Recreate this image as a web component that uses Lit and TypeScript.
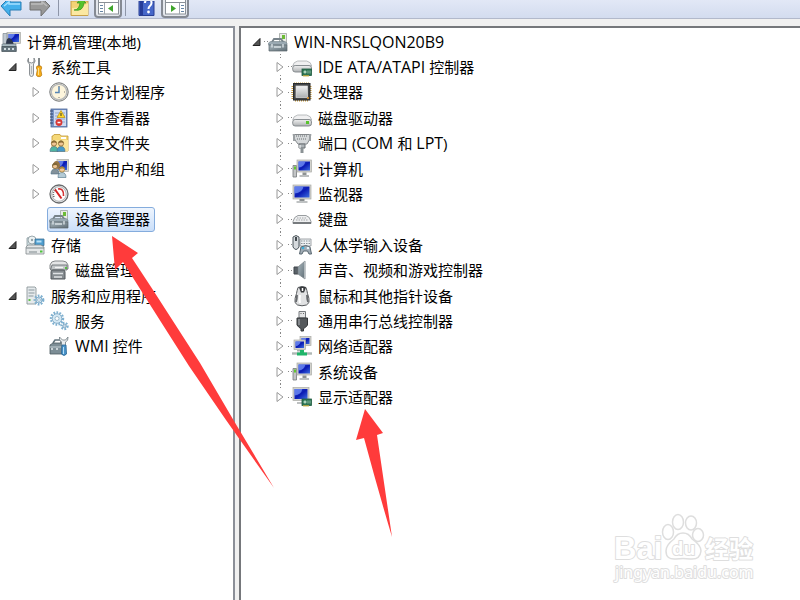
import { LitElement, html, css, svg, nothing, SVGTemplateResult } from "lit";
import { customElement, property } from "lit/decorators.js";
import { classMap } from "lit/directives/class-map.js";

const screen = (x: number, y: number, w: number, h: number) => svg`
  <rect x=${x} y=${y} width=${w} height=${h} fill="#d3d3cd" stroke="#a9aaa6" stroke-width=".7"/>
  <rect x=${x + 1.5} y=${y + 1.5} width=${w - 3} height=${h - 3} fill="url(#scr)"/>
  <path d="M${x + 1.5} ${y + 1.5}h${(w - 3) * 0.6}q-1 ${h * 0.45} ${-(w - 3) * 0.6} ${h * 0.5}z" fill="#6f8cf2" opacity=".8"/>`;

const toolcase = svg`
  <path d="M11.500 10V1.500h7V14h-3z" fill="#e9ebe6" stroke="#9da39f" stroke-width=".8"/>
  <path d="M14 3h3v4h-3z" fill="#6cbb35"/>
  <path d="M4 10l2-3h7l3 4" fill="none" stroke="#77838a" stroke-width="1.800"/>
  <path d="M.500 11l2-1.500h14.500l2 1.500v2H.500z" fill="#9aa9b2" stroke="#74838c" stroke-width=".6"/>
  <path d="M1 13h18v6H1z" fill="url(#steel)" stroke="#59656c" stroke-width=".7"/>
  <path d="M4 12v3.500M15 12v3.500M6 15h7" stroke="#d7e0e4" stroke-width="1.400"/>`;

const gear = (cx: number, cy: number, r: number) => svg`
  <circle cx=${cx} cy=${cy} r=${r} fill="none" stroke="#7eb0d0" stroke-width="2.400" stroke-dasharray="1.700 1.300"/>
  <circle cx=${cx} cy=${cy} r=${r - 1.2} fill="#d5e9f4" stroke="#86aeca" stroke-width="1"/>
  <circle cx=${cx} cy=${cy} r=${r / 3} fill="#fff" stroke="#8fb0c5" stroke-width=".8"/>`;

const person = (x: number, y: number, hair: string, body: string) => svg`
  <path d="M${x - 4} ${y + 8}q0-5 4-5t4 5z" fill=${body} stroke="#4d7184" stroke-width=".6"/>
  <circle cx=${x} cy=${y} r="2.600" fill="#f0c695" stroke=${hair} stroke-width=".8"/>
  <path d="M${x - 2.7} ${y}q0-3 2.700-3t2.700 3q-2-2-5.400 0z" fill=${hair}/>`;

const drive = (y: number) => svg`
  <path d="M.700 ${y + 5}q.500-4 5-5h9q4.500 1 5 5z" fill="#f0f0f1" stroke="#aaadb0" stroke-width=".8"/>
  <rect x=".700" y=${y + 4.5} width="18.800" height="6.500" rx="2.500" fill="url(#metal)" stroke="#7f8488" stroke-width=".9"/>`;

const chip = svg`
  <rect x="10" y="12" width="9.500" height="6.500" fill="#2d7454" stroke="#1f5b40" stroke-width=".8"/>
  <path d="M12 14h2v2h-2zM16 13.500v3M18 13.500v3" fill="#b4d9c5" stroke="#a6cfb8" stroke-width=".8"/>
  <path d="M11 18.800h6" stroke="#c2aa3c" stroke-width="1.200"/>`;

const pcWithTower = svg`
  <path d="M1 6.500h3.500V18H1z" fill="#c3c5c6" stroke="#75797b" stroke-width=".8"/>
  <path d="M2 7.500h2v3H2z" fill="#63c832"/>
  ${screen(5, 1, 14.5, 12)}
  <path d="M10.500 13.500h4v2.500h-4z" fill="#8e9293"/><path d="M7.500 16h9.500v2H7.500z" fill="#bbbebf"/>`;

const ICONS: Record<string, SVGTemplateResult> = {
  console: svg`
    ${screen(6, 0.5, 13.5, 11)}
    <path d="M2 1.500h4v10H2z" fill="#bfc8d0" stroke="#7f8992" stroke-width=".7"/>
    <path d="M5 13q0-7 3-7t5 7z" fill="#2d374c"/>
    <path d="M1 12h14v2.500H1z" fill="#a9b9c1" stroke="#68777f" stroke-width=".6"/>
    <path d="M.800 14.500h14.500v5H.800z" fill="#64747d" stroke="#404d54" stroke-width=".7"/>
    <path d="M3 16h2v2H3zM7 16h2v2H7zM11 16h2v2h-2z" fill="#d3dde1"/>`,
  tools: svg`
    <path d="M3.500 1q-2 3 0 5l1 1V17q0 2.500 2 2.500t2-2.500V7q3-3 .500-6v4l-2.500 1-3-1z" fill="#e8eaeb" stroke="#80868a" stroke-width=".9"/>
    <path d="M6.500 9v8" stroke="#b2b7ba" stroke-width="1.200"/>
    <path d="M13 1h2v9h-2z" fill="#83898c"/>
    <path d="M12 9h4l.800 2-1 2 1 5q-.500 1.700-2.800 1.700T11.300 18l1-5-1-2z" fill="#f6ad1a" stroke="#b77405" stroke-width=".7"/>
    <path d="M13.500 11v7" stroke="#ffe18a"/>`,
  clock: svg`
    <circle cx="10" cy="10" r="9.200" fill="#f7f2e2" stroke="#6e7173" stroke-width="1"/>
    <circle cx="10" cy="10" r="7.800" fill="#fdf5dc" stroke="#b8babb" stroke-width="1.500"/>
    <path d="M10 4.500V10.500h-4" fill="none" stroke="#5786b5" stroke-width="1.500"/>
    <path d="M10 4v1M10 15v1M15 10h1" stroke="#777"/>`,
  events: svg`
    <rect x="2" y="1" width="16" height="18" fill="#7995c7" stroke="#4a6598" stroke-width=".8"/>
    <path d="M5 2h12v16H5z" fill="#cfdbf1"/><path d="M6 5h10M6 8h10M6 11h10M6 14h10" stroke="#91a7d0"/>
    <path d="M1 3h3M1 6h3M1 9h3M1 12h3M1 15h3" stroke="#37496d" stroke-width="1.200"/>
    <path d="M12 2.500l4 7H8z" fill="#ffda29" stroke="#bd8f0a" stroke-width=".7"/><path d="M12 5v3" stroke="#333"/>
    <circle cx="10" cy="14.500" r="3.400" fill="#d93735"/><path d="M8.500 14.500h3" stroke="#fff" stroke-width="1.500"/>`,
  share: svg`
    <path d="M3 5V3h1l1-1.500h6L12 3h7v15H3z" fill="#f5d878" stroke="#c29832" stroke-width=".8"/>
    <path d="M12 4h5v2h-5z" fill="#fff"/><path d="M3 7h16v11H3z" fill="#fbe69c"/>
    ${person(5, 10.5, "#8a6d35", "#4fb5a2")}${person(12, 10.5, "#8a6d35", "#4599c8")}`,
  users: svg`
    ${screen(8, 0.5, 11.5, 12)}
    <path d="M3.500 9q0-6 3.500-7 4 0 4 5l-1 3z" fill="#967544"/>
    ${person(6, 7, "#7f6638", "#83919a")}${person(13, 10.5, "#a8853c", "#b4cbd6")}`,
  gauge: svg`
    <circle cx="10" cy="10" r="9" fill="#fff" stroke="#686b6d" stroke-width="1.300"/>
    <circle cx="10" cy="10" r="7.300" fill="#fff" stroke="#b9bcbd" stroke-width="1.200"/>
    <path d="M5 13q-2-5 2-8" fill="none" stroke="#626567" stroke-width="1.500" stroke-dasharray="1 1"/>
    <path d="M6 5.500l6.500 9" stroke="#d52424" stroke-width="2"/>
    <path d="M9 5q6-1 5.500 7" fill="none" stroke="#d23434" stroke-width="1.600"/>`,
  devices: toolcase,
  storage: svg`
    <path d="M2 11V3q3-2.500 8 0v8z" fill="#cfdfe3" stroke="#8c9b9f" stroke-width=".8"/>
    <circle cx="7" cy="5" r="4" fill="#edf3f4" stroke="#9ca9ad"/><circle cx="7" cy="5" r="1.200" fill="#91a1a7"/>
    <path d="M10 4h9v6.500h-9z" fill="#4e9dce" stroke="#3a6e94" stroke-width=".8"/><path d="M11.500 5.500h5v2h-5z" fill="#b9e0f6"/>
    <path d="M1 12l2-2h13l3 2v7H1z" fill="#e4e7e8" stroke="#838b8e" stroke-width=".8"/>
    <path d="M1 13h18M4 17h8" stroke="#7d878b"/><path d="M15 15.500h2.500v2H15z" fill="#4dc43b"/>`,
  disk: svg`
    <path d="M1 5q1-4 5-4h8q4 0 5 4v4H1z" fill="#e4e5e6" stroke="#85898b"/>
    <path d="M3 5h15v5H1.500z" fill="#c2c6c8" stroke="#6d7376" stroke-width=".9"/>
    <path d="M6 7.500h8" stroke="#f4f4f4" stroke-width="1.300"/><path d="M16 7h2v2h-2z" fill="#57bb45"/>
    <path d="M2 12q0-2 2-2h10q2 0 2 2v7H2z" fill="#868c90" stroke="#53595c"/>
    <path d="M4 13.500h10M5 17h8" stroke="#dfe2e4" stroke-width="1.500"/>`,
  server: svg`
    <path d="M2 1h8l1 1v16H2z" fill="#e5eaec" stroke="#8c979b" stroke-width=".9"/>
    <path d="M3.500 4h6M3.500 7h6M3.500 10h5" stroke="#8b989e" stroke-width="1.200"/>
    <path d="M3.500 13h2v2h-2z" fill="#5fc146"/>${gear(14, 14, 4.2)}`,
  gears: svg`${gear(8, 7.5, 6)}${gear(15.5, 15, 3)}`,
  wmi: svg`
    <path d="M4 7l2-3h6v3" fill="none" stroke="#63747d" stroke-width="1.600"/>
    <path d="M1 9l3-2h10v11H1z" fill="#7c8d95" stroke="#4b5a61" stroke-width=".8"/>
    <path d="M1 11h13" stroke="#c4d0d5"/><path d="M3 12v2M8 12v2" stroke="#e3eaed" stroke-width="1.500"/>
    <path d="M10.500 1q-1 3 2 5v6h4V6q3-1 2.500-5l-2.500 3h-3z" fill="#e8ecee" stroke="#717c81" stroke-width=".8"/>
    <path d="M13 9h4l.500 9q-2.500 3-5 0z" fill="#4993ca" stroke="#286592" stroke-width=".8"/><path d="M14.500 11v7" stroke="#b7e0fa"/>`,
  ide: svg`${drive(4)}${chip}`,
  cpu: svg`
    <path d="M2 3h15v14H2z" fill="none" stroke="#c99b3d" stroke-width="5" stroke-dasharray="1 1"/>
    <rect x="1.500" y="1.500" width="16.500" height="16.500" fill="#444648" stroke="#292b2d"/>
    <rect x="4" y="4" width="11.500" height="11.500" fill="url(#metal)" stroke="#dedede" stroke-width=".7"/>
    <circle cx="16" cy="16" r="1" fill="#ef9d28"/>`,
  drive: svg`${drive(7)}<path d="M14 13h3v3h-3z" fill="#59c52d"/>`,
  port: svg`
    <path d="M1 1.500h18l-2 6-2 3.500H6L3 7z" fill="#d5d8da" stroke="#85898c"/>
    <path d="M4 3h11M5 6h10" stroke="#8d9295" stroke-width="1.500" stroke-dasharray="1 1"/>
    <path d="M2 1v7M18 1v7" stroke="#9ba0a3" stroke-width="2"/>
    <path d="M7 11h6v4H7z" fill="#aeb4b8" stroke="#6c7377"/><path d="M8.500 15h3v5h-3z" fill="#8b9295"/><path d="M8 12v3" stroke="#fff"/>`,
  computer: pcWithTower,
  monitor: svg`
    ${screen(1, 1, 18, 14)}<path d="M7.500 15h5v2.500h-5z" fill="#888d8f"/><path d="M4.500 17h11v2h-11z" fill="#bfc2c3"/>`,
  keyboard: svg`
    <path d="M1 12.500q1-5 5-6h8q4 1 5 6v2H1z" fill="#eeeff0" stroke="#999da0"/>
    <path d="M5 9h10M4 11h12" stroke="#a4a7aa" stroke-dasharray="1.500 1"/>
    <path d="M1 13h18v2H1z" fill="#777b7e"/>`,
  hid: svg`
    <path d="M8 4h11v7H8z" fill="#edf0f2" stroke="#8a9196" stroke-width=".8"/>
    <path d="M9 6h9M9 8.500h9" stroke="#8a9399" stroke-width="1.200" stroke-dasharray="1.500 1"/>
    <path d="M1 2q3-3 6 0v10q-3 5-6 0z" fill="#d6dadd" stroke="#4d565c"/><path d="M4 2v4" stroke="#30383d" stroke-width="1.800"/>
    <path d="M9 12q5-3 9 0l1.500 7H17l-1.500-3h-4L10 19H7.500z" fill="#a1acb5" stroke="#596770"/>
    <circle cx="11" cy="13" r="1.300" fill="#3bb0dc"/><circle cx="16" cy="13" r="1.300" fill="#eaf5fa"/>`,
  speaker: svg`
    <path d="M2 7h4v7H2z" fill="#596167" stroke="#3e454a"/><path d="M6 7l7-6v18l-7-5z" fill="url(#steel)" stroke="#7e868b" stroke-width=".8"/>
    <path d="M13 1.500v17" stroke="#c1c7ca" stroke-width="1.600"/>`,
  mouse: svg`
    <path d="M6 1.500Q10-.500 14 1.500q1 3 1.500 6 2 5 1.500 9-1.500 3.300-7 3.300T3 16.500q-.500-4 1.500-9 .500-3 1.500-6z" fill="#e1e2e3" stroke="#575a5d"/>
    <path d="M5 9q0 4-1 7M15 9q0 4 1 7" fill="none" stroke="#66696c" stroke-width="1.800"/>
    <path d="M7 1.500l2 5h3l2-5-2-.700H9z" fill="#373a3d"/><path d="M10.500 2v3" stroke="#fff" stroke-width="1.500"/><path d="M8 9q-1 5 0 8" stroke="#fff" stroke-width="2" fill="none"/>`,
  usb: svg`
    <path d="M7 .500h6.500V7H7z" fill="#e4e5e6" stroke="#777b7e"/><path d="M8.500 2.500h1M11 2.500h1" stroke="#666"/>
    <path d="M5 7h10.500v7q-2 3-4 3.500V20H9v-2.500Q7 17 5 14z" fill="#55595c" stroke="#35383a"/><path d="M7 8v6" stroke="#94999c" stroke-width="1.500"/>`,
  network: svg`
    ${screen(8, 0.5, 11, 9)}${screen(2, 4, 11.5, 9.5)}
    <path d="M5 14h5v1.500H5z" fill="#a9adaf"/><path d="M0 17.500h20" stroke="#aeb7b4" stroke-width="2.400"/>
    <path d="M8 14h4v2.500h3v3H5v-3h3z" fill="#20b66a"/>`,
  display: svg`${screen(1, 0.5, 16, 13)}<path d="M5 15h6v2H5z" fill="#bdc0c1"/>${chip}`,
};

@customElement("tree-icon")
class TreeIcon extends LitElement {
  @property() name = "";
  static styles = css`
    :host { display: block; width: 20px; height: 20px; }
    svg { display: block; width: 20px; height: 20px; overflow: visible; }
  `;
  render() {
    return html`<svg viewBox="0 0 20 20" aria-hidden="true">
      <defs>
        <linearGradient id="scr" x1="0" y1="0" x2="1" y2="1">
          <stop offset="0" stop-color="#2343d6"/><stop offset=".5" stop-color="#0b1bb4"/><stop offset="1" stop-color="#3d6ee0"/>
        </linearGradient>
        <linearGradient id="steel" x1="0" y1="0" x2="1" y2="1">
          <stop offset="0" stop-color="#a9b7be"/><stop offset="1" stop-color="#5e6c74"/>
        </linearGradient>
        <linearGradient id="metal" x1="0" y1="0" x2="0" y2="1">
          <stop offset="0" stop-color="#f1f1f1"/><stop offset="1" stop-color="#adb0b2"/>
        </linearGradient>
      </defs>
      ${ICONS[this.name]}
    </svg>`;
  }
}

interface Row {
  label: string;
  icon: string;
  level: number;
  state?: "open" | "closed";
  selected?: boolean;
}

const row = (level: number, icon: string, label: string, state?: Row["state"], selected = false): Row =>
  ({ level, icon, label, state, selected });

const CONSOLE: Row[] = [
  row(0, "console", "计算机管理(本地)"),
  row(1, "tools", "系统工具", "open"),
  row(2, "clock", "任务计划程序", "closed"),
  row(2, "events", "事件查看器", "closed"),
  row(2, "share", "共享文件夹", "closed"),
  row(2, "users", "本地用户和组", "closed"),
  row(2, "gauge", "性能", "closed"),
  row(2, "devices", "设备管理器", undefined, true),
  row(1, "storage", "存储", "open"),
  row(2, "disk", "磁盘管理"),
  row(1, "server", "服务和应用程序", "open"),
  row(2, "gears", "服务"),
  row(2, "wmi", "WMI 控件"),
];

const DEVICES: Row[] = [
  row(1, "devices", "WIN-NRSLQON20B9", "open"),
  row(2, "ide", "IDE ATA/ATAPI 控制器", "closed"),
  row(2, "cpu", "处理器", "closed"),
  row(2, "drive", "磁盘驱动器", "closed"),
  row(2, "port", "端口 (COM 和 LPT)", "closed"),
  row(2, "computer", "计算机", "closed"),
  row(2, "monitor", "监视器", "closed"),
  row(2, "keyboard", "键盘", "closed"),
  row(2, "hid", "人体学输入设备", "closed"),
  row(2, "speaker", "声音、视频和游戏控制器", "closed"),
  row(2, "mouse", "鼠标和其他指针设备", "closed"),
  row(2, "usb", "通用串行总线控制器", "closed"),
  row(2, "network", "网络适配器", "closed"),
  row(2, "computer", "系统设备", "closed"),
  row(2, "display", "显示适配器", "closed"),
];

// Latin runs are set one pixel larger than the Chinese text around them.
const runs = (label: string) =>
  label.split(/([A-Z][A-Z0-9\-\/ ]*)/).filter(Boolean)
    .map((part) => (/^[A-Z]/.test(part) ? html`<b class="latin">${part}</b>` : part));

@customElement("nav-tree")
class NavTree extends LitElement {
  @property({ attribute: false }) rows: Row[] = [];
  @property({ type: Boolean }) lines = false;
  @property() label = "";
  static styles = css`
    :host { display: block; }
    ul { list-style: none; margin: 0; padding: 0; }
    li { display: flex; align-items: center; height: 25px; white-space: nowrap; }
    li:nth-child(5n + 3), li:nth-child(5n) { height: 26px; }
    .level-2 { padding-left: 24px; }
    .twisty {
      flex: none; width: 24px; height: 100%; padding: 0; border: 0; background: none;
      display: flex; flex-direction: column; align-items: center; justify-content: space-between;
    }
    .twisty svg { display: block; width: 10px; height: 12px; margin: auto; }
    .lines .level-2 .twisty::before, .lines .level-2 .twisty::after {
      content: ""; height: 4px; width: 1px;
      background: repeating-linear-gradient(#888 0 1px, transparent 1px 3px);
    }
    .lines .level-2:last-child .twisty::after { background: none; }
    .lines .item::before {
      content: ""; width: 4px; height: 1px; margin-left: -4px;
      background: repeating-linear-gradient(90deg, #888 0 1px, transparent 1px 3px);
    }
    .item {
      display: flex; align-items: center; height: 25px; box-sizing: border-box;
      color: #000; text-decoration: none; line-height: 22px; padding-left: 1px;
    }
    .lines .item { padding-left: 0; }
    .item span { padding: 0 4px 0 6px; }
    .latin { font-weight: 400; font-size: 16px; }
    .item.selected {
      margin-left: -1px; border: 1px solid #84acdd; border-radius: 3px;
      background: linear-gradient(#eef5fe, #cbdff9);
    }
  `;
  render() {
    return html`<ul class=${classMap({ lines: this.lines })} aria-label=${this.label}>
      ${this.rows.map((r) => html`<li class="level-${r.level}">
        ${r.level === 0 ? nothing : r.state
          ? html`<button class="twisty" aria-label=${(r.state === "open" ? "折叠 " : "展开 ") + r.label}>
              <svg viewBox="0 0 10 12" aria-hidden="true">${r.state === "open"
                ? svg`<path d="M9 2.500v7H2z" fill="#555" stroke="#222"/>`
                : svg`<path d="M2 1.500l6 4.500-6 4.500z" fill="#fff" stroke="#999"/>`}</svg>
            </button>`
          : html`<span class="twisty"></span>`}
        <a href="#" class=${classMap({ item: true, selected: !!r.selected })}>
          <tree-icon name=${r.icon}></tree-icon><span>${runs(r.label)}</span>
        </a>
      </li>`)}
    </ul>`;
  }
}

const paneGlyph = (flip: boolean) => svg`
  <rect x=".5" y="-4" width="20" height="18" fill="#fff" stroke="#8a9097"/>
  <path d="M1 2.500h19" stroke="#8a9097"/>
  <path d=${flip ? "M14.500 3v11" : "M6.500 3v11"} stroke="#9fa6ad"/>
  <path d=${flip ? "M16 5.500h3M16 8.500h3M16 11.500h3" : "M2 5.500h3M2 8.500h3M2 11.500h3"} stroke="#6886a5" stroke-width="1.200"/>
  <path d=${flip ? "M6 5l5 3.500-5 3.500z" : "M15 5l-5 3.500 5 3.500z"} fill="#3fa52c"/>`;

@customElement("app-root")
class AppRoot extends LitElement {
  static styles = css`
    :host {
      display: flex; flex-direction: column; position: relative; min-height: 100vh; overflow: hidden;
      background: #f0f0f0; font: 15px/22px "Open Sans", "Noto Sans CJK SC", sans-serif; color: #000;
    }
    .toolbar {
      display: flex; align-items: flex-start; height: 18px;
      background: linear-gradient(#e2e8f6, #d3dcef); border-bottom: 1px solid #b2b9cb;
    }
    .toolbar button { border: 0; padding: 0; margin: 0; background: none; height: 18px; }
    .toolbar svg { display: block; height: 17px; }
    .history { display: flex; gap: 7px; }
    .history svg { width: 22px; }
    .group { display: flex; gap: 5px; margin: 0 3px 0 11px; }
    .group svg { width: 19px; }
    .rule { width: 1px; height: 16px; background: #8e96a8; }
    .history + .rule { margin-left: 7px; }
    .toolbar .framed {
      box-sizing: border-box; width: 28px; border: 2px solid #858a93; border-top: 0; border-radius: 0 0 4px 4px;
      background: #e4e7ec; display: flex; justify-content: center;
    }
    .toolbar .framed svg { width: 21px; height: 15px; }
    .panes { display: flex; flex: 1; gap: 4px; padding-top: 7px; }
    .pane { background: #fff; box-sizing: border-box; padding-top: 1px; }
    .side { flex: none; width: 235px; border: solid #8b8f98; border-width: 2px 2px 0 0; }
    .main { flex: 1; border: solid #75777b; border-width: 2px 0 0 2px; padding-left: 3px; }
    .marks { position: absolute; left: 0; top: 0; width: 400px; height: 560px; pointer-events: none; }
    .brand { position: absolute; right: 40px; bottom: 12px; width: 150px; height: 80px; pointer-events: none; }
    .brand text {
      fill: #fff; stroke: #dedede; stroke-width: 2px; paint-order: stroke; stroke-linejoin: round;
    }
    .brand .logo { font: 700 31px "Liberation Sans", sans-serif; }
    .brand .small { font: 700 18px "Open Sans", sans-serif; }
    .brand .han { font: 700 24px "Noto Sans CJK SC", sans-serif; }
    .brand .site { font: 16px "Noto Sans", sans-serif; }
  `;
  render() {
    return html`
      <div class="toolbar" role="toolbar" aria-label="工具栏">
        <div class="history">
          <button aria-label="后退"><svg viewBox="0 0 22 17"><path d="M1 5l9-9v5h11v8H10v6z" fill="#43b0ec" stroke="#287eb5"/><path d="M4 5l5-4v2h11" fill="none" stroke="#a5e0ff" stroke-width="1.500"/></svg></button>
          <button aria-label="前进"><svg viewBox="0 0 22 17"><path d="M21 5l-9-9v5H1v8h11v6z" fill="#999" stroke="#717171"/><path d="M2 3h11V1l5 4" fill="none" stroke="#bcbcbc" stroke-width="1.500"/></svg></button>
        </div>
        <span class="rule"></span>
        <div class="group">
          <button aria-label="上一级"><svg viewBox="0 0 19 17"><path d="M1 0h17v14.500H1z" fill="#f3d375" stroke="#c7a04a"/><path d="M2 7q9 0 16-5v12H2z" fill="#fbe8a2"/><path d="M4 9q5 0 6-7H7l4-5 5 5h-2q-1 9-10 7z" fill="#55c32c" stroke="#35931c" stroke-width=".7"/></svg></button>
          <button class="framed" aria-label="显示/隐藏控制台树"><svg viewBox="0 0 21 15">${paneGlyph(false)}</svg></button>
        </div>
        <span class="rule"></span>
        <div class="group">
          <button aria-label="帮助"><svg viewBox="0 0 19 17"><path d="M2 0h15v14.500H2z" fill="#4667c9" stroke="#293f93"/><path d="M3 0h3v14H3z" fill="#263c98"/><path d="M8 2q0-3.500 3.300-3.500T14.500 2q0 1.800-1.800 3.200-1.200 1-1.200 2.800" fill="none" stroke="#fff" stroke-width="2"/><circle cx="11.500" cy="11" r="1.400" fill="#fff"/></svg></button>
          <button class="framed" aria-label="显示/隐藏操作窗格"><svg viewBox="0 0 21 15">${paneGlyph(true)}</svg></button>
        </div>
      </div>
      <div class="panes">
        <nav class="pane side"><nav-tree label="控制台树" .rows=${CONSOLE}></nav-tree></nav>
        <main class="pane main"><nav-tree label="设备" lines .rows=${DEVICES}></nav-tree></main>
      </div>
      <svg class="marks" viewBox="0 0 400 560" aria-hidden="true">
        <path d="M112 236L138 253L132 258L153 290L200 363L234 421L274 488L226 420L189 366L161 322L123 262L115 270Z" fill="#ff3b3b"/>
        <path d="M365 409L383 433L377 435L392 537Q378 490 364 438L356 440Z" fill="#ff3b3b"/>
      </svg>
      <svg class="brand" viewBox="0 0 150 80">
        <g fill="#fff" stroke="#dedede" stroke-width="1.500">
          <ellipse cx="58" cy="24" rx="5.500" ry="7.500"/><ellipse cx="68" cy="14" rx="5.500" ry="7.500"/>
          <ellipse cx="81" cy="15" rx="5.500" ry="7"/><ellipse cx="88" cy="27" rx="5.500" ry="6.500"/>
          <path d="M73 25q6 0 9 6 9 6 9 12-1 9-11 8-7-1-14 0-10 1-10-8 0-6 8-12 3-6 9-6z"/>
        </g>
        <text class="logo" x="4" y="51">Bai</text>
        <text class="small" x="62" y="47">du</text>
        <text class="han" x="95" y="50">经验</text>
        <text class="site" x="5" y="70">jingyan.baidu.com</text>
      </svg>`;
  }
}
